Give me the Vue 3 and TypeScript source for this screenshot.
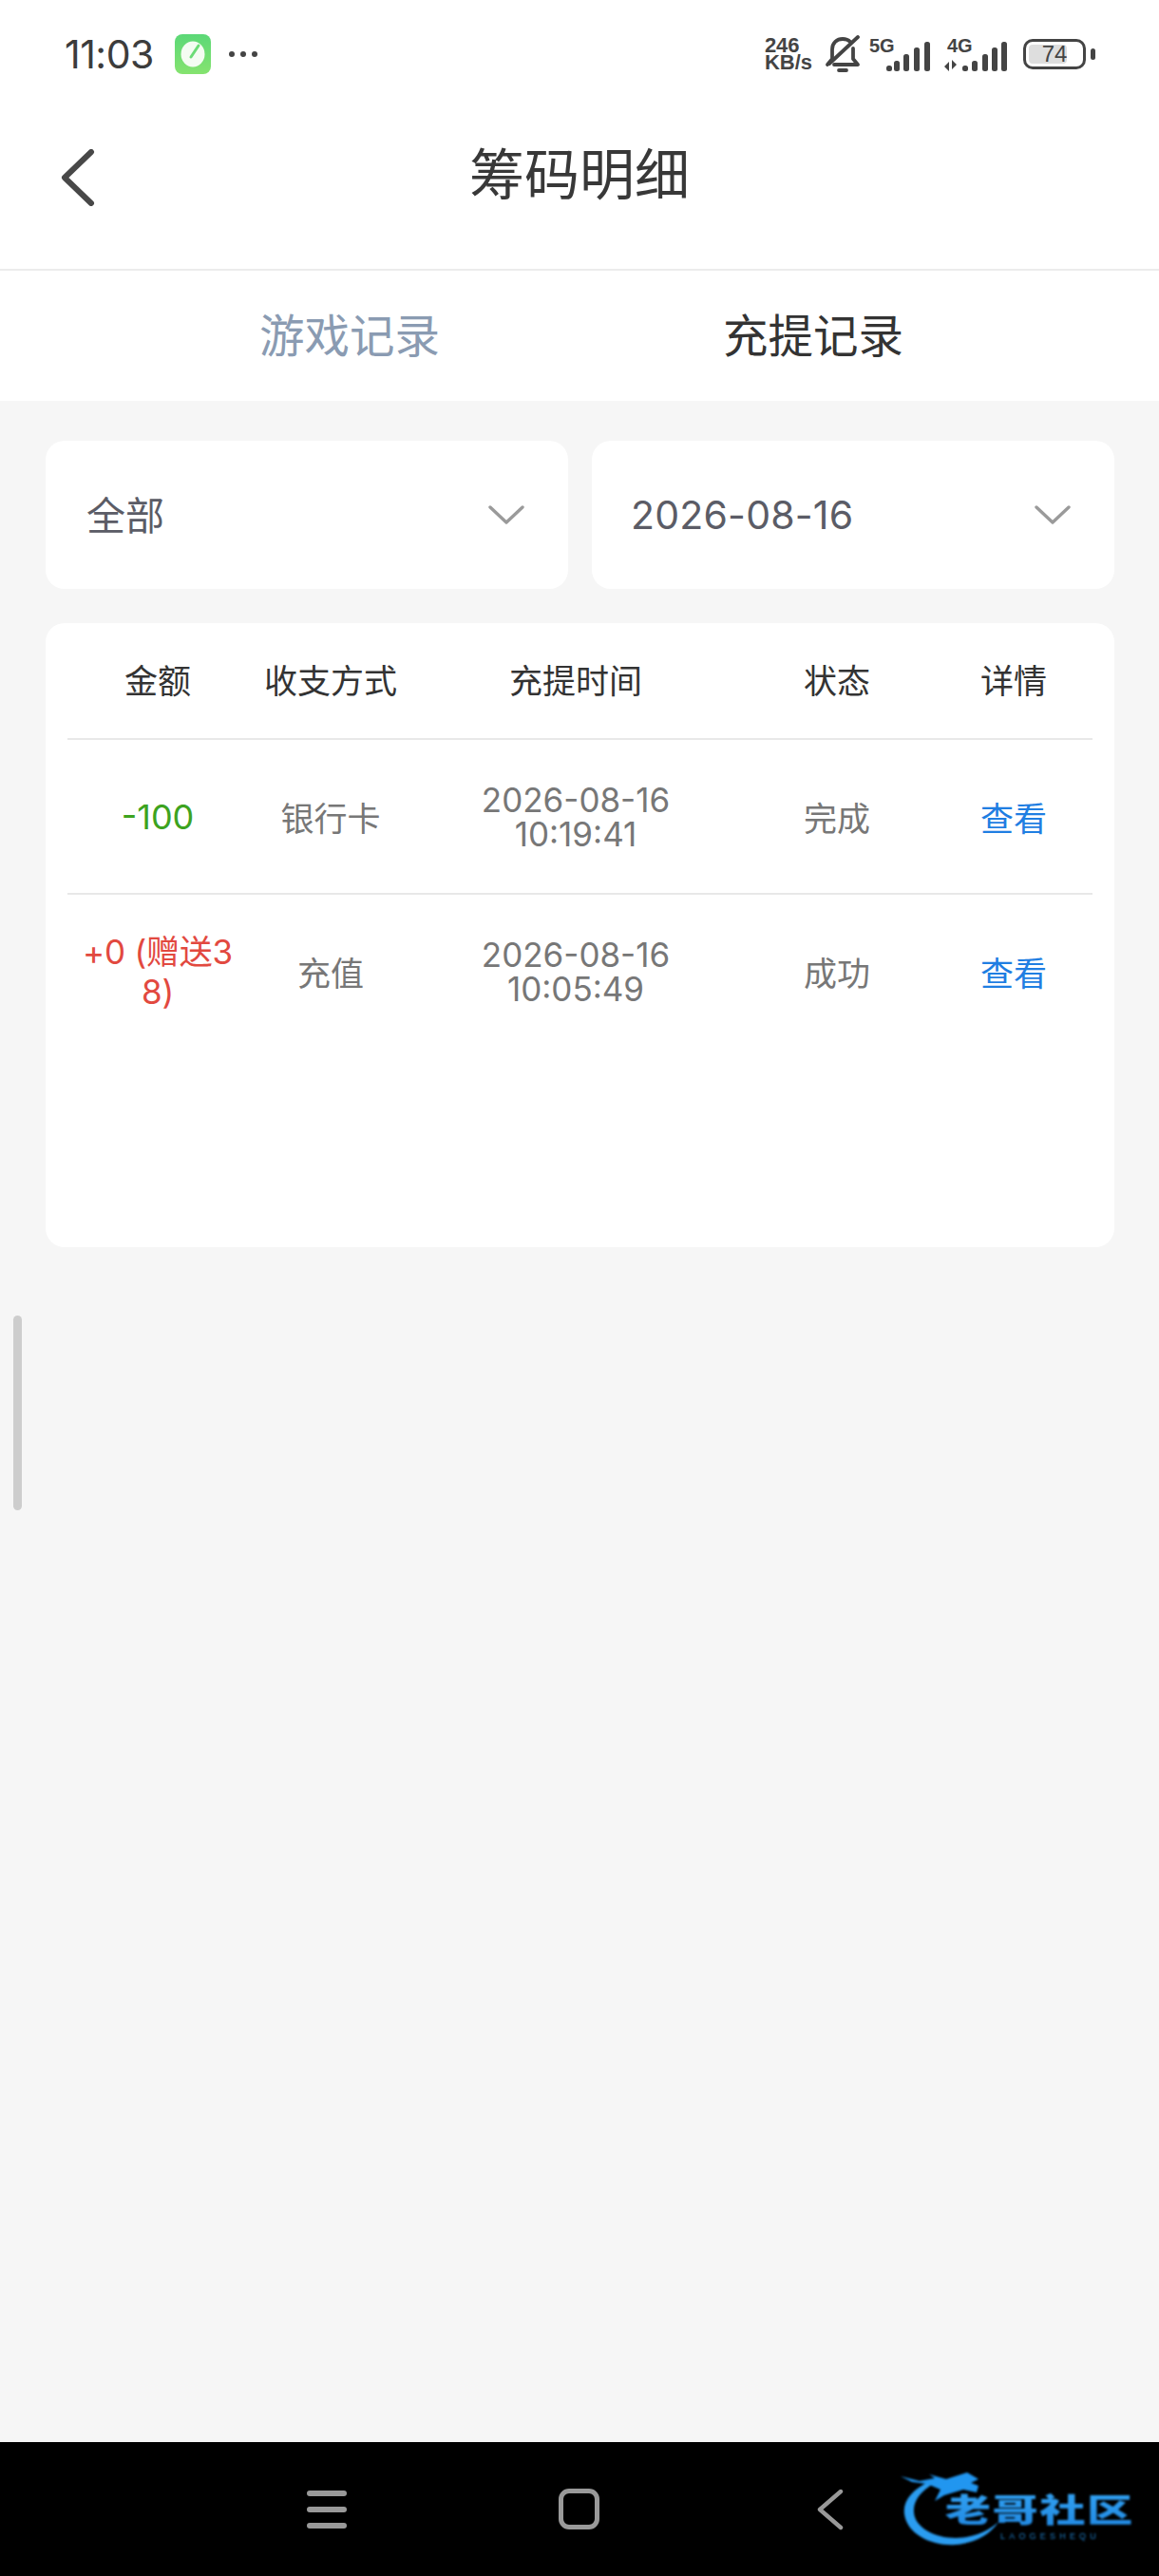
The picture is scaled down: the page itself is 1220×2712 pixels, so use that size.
<script setup lang="ts">
interface Row {
  amount: string
  kind: 'out' | 'in'
  method: string
  date: string
  time: string
  status: string
}
const heads: string[] = ['金额', '收支方式', '充提时间', '状态', '详情']
const rows: Row[] = [
  { amount: '-100', kind: 'out', method: '银行卡', date: '2026-08-16', time: '10:19:41', status: '完成' },
  { amount: '+0 (赠送38)', kind: 'in', method: '充值', date: '2026-08-16', time: '10:05:49', status: '成功' },
]
const bars5 = [
  { x: 18, h: 6 }, { x: 26, h: 11 }, { x: 36, h: 18 }, { x: 47, h: 25 }, { x: 58, h: 31 },
]
const bars4 = [
  { x: 19, h: 6 }, { x: 29, h: 11 }, { x: 40, h: 18 }, { x: 50, h: 25 }, { x: 60, h: 31 },
]
</script>

<template>
  <div class="page">
    <header class="status">
      <div class="status-left">
        <span class="clock">11:03</span>
        <svg class="app-icon" width="38" height="42" viewBox="0 0 38 42">
          <defs>
            <linearGradient id="appg" x1="0" y1="0" x2="0" y2="1">
              <stop offset="0" stop-color="#5bd877" />
              <stop offset="1" stop-color="#85e36f" />
            </linearGradient>
          </defs>
          <rect width="38" height="42" rx="8" fill="url(#appg)" />
          <ellipse cx="19" cy="21" rx="12.5" ry="13.5" fill="#f4fcf2" />
          <path d="M17 24 L25 12" stroke="#6bdc76" stroke-width="3" stroke-linecap="round" />
        </svg>
        <span class="dots"><i></i><i></i><i></i></span>
      </div>
      <div class="status-right">
        <span class="speed"><b>246</b><b>KB/s</b></span>
        <svg class="bell" width="38" height="40" viewBox="0 0 38 40" fill="none" stroke="#444" stroke-width="3.8" stroke-linecap="round" stroke-linejoin="round">
          <path d="M3 31 L8 25 V15 C8 8 13 4 19 4 C22 4 25 5 27 7" />
          <path d="M30 14 V25 L35 31 H10" />
          <path d="M5 30 L35 2" />
          <path d="M15 37 H23" />
        </svg>
        <svg class="signal" width="66" height="49" viewBox="0 -12 66 49">
          <text x="0" y="16" class="net">5G</text>
          <rect v-for="b in bars5" :key="b.x" :x="b.x" :y="36 - b.h" width="6" :height="b.h" rx="2.5" fill="#444" />
        </svg>
        <svg class="signal second" width="67" height="49" viewBox="0 -12 67 49">
          <text x="3" y="16" class="net">4G</text>
          <path d="M5 36 V26 L0 31 Z M8 24 V34 L13 29 Z" fill="#444" />
          <rect v-for="b in bars4" :key="b.x" :x="b.x" :y="36 - b.h" width="6" :height="b.h" rx="2.5" fill="#444" />
        </svg>
        <div class="battery">
          <div class="cell">
            <span class="charge"></span>
            <span class="level">74</span>
          </div>
          <span class="cap"></span>
        </div>
      </div>
    </header>

    <nav class="nav">
      <svg class="back" width="40" height="60" viewBox="0 0 40 60" fill="none">
        <path d="M34 3 L6 30 L34 57" stroke="#484848" stroke-width="6" stroke-linecap="round" stroke-linejoin="round" />
      </svg>
      <h1 class="title">筹码明细</h1>
    </nav>

    <div class="tabs">
      <span class="tab muted">游戏记录</span>
      <span class="tab">充提记录</span>
    </div>

    <main class="main">
      <div class="scroll-thumb"></div>

      <div class="filters">
        <div class="select">
          <span class="cjk lift">全部</span>
          <svg width="38" height="22" viewBox="0 0 38 22" fill="none">
            <path d="M2 3 L19 19 L36 3" stroke="#9a9a9a" stroke-width="3.4" stroke-linecap="round" stroke-linejoin="round" />
          </svg>
        </div>
        <div class="select">
          <span class="date-value">2026-08-16</span>
          <svg width="38" height="22" viewBox="0 0 38 22" fill="none">
            <path d="M2 3 L19 19 L36 3" stroke="#9a9a9a" stroke-width="3.4" stroke-linecap="round" stroke-linejoin="round" />
          </svg>
        </div>
      </div>

      <section class="card">
        <div class="grid head">
          <span v-for="h in heads" :key="h" class="cjk lift">{{ h }}</span>
        </div>
        <div v-for="r in rows" :key="r.time" class="grid row">
          <span class="amount" :class="r.kind">{{ r.amount }}</span>
          <span class="cjk">{{ r.method }}</span>
          <span class="when">{{ r.date }}<br />{{ r.time }}</span>
          <span class="cjk">{{ r.status }}</span>
          <a class="link cjk">查看</a>
        </div>
      </section>
    </main>

    <footer class="sysbar">
      <div class="menu"><i></i><i></i><i></i></div>
      <div class="home"></div>
      <svg class="sys-back" width="30" height="44" viewBox="0 0 30 44" fill="none">
        <path d="M26 3 L4 22 L26 41" stroke="#999" stroke-width="4.4" stroke-linecap="round" stroke-linejoin="round" />
      </svg>
      <svg class="logo" width="252" height="80" viewBox="0 0 252 80">
        <defs>
          <linearGradient id="lg" x1="0" y1="0" x2="0" y2="1">
            <stop offset="0" stop-color="#35a6f5" />
            <stop offset="1" stop-color="#1f86e0" />
          </linearGradient>
        </defs>
        <path d="M31 9 C12 18 2 30 4 44 C7 66 35 78 58 76 C78 74 94 66 103 52 C92 62 76 69 58 69 C36 69 15 58 14 42 C13 31 20 20 36 11 Z" fill="#2a9cf0" />
        <path d="M0 4 L20 9 L36 6 L30 2 L48 7 L70 0 L82 7 L74 11 L82 14 L80 21 L66 18 L46 24 L36 30 L42 18 L28 12 L12 10 Z" fill="#2196f0" />
        <text transform="scale(1.42,1)" x="33" y="52" class="logo-text" fill="url(#lg)">老哥社区</text>
        <text x="105" y="70" class="logo-sub">LAOGESHEQU</text>
      </svg>
    </footer>
  </div>
</template>

<style>
html, body { margin: 0; padding: 0; background: #f6f6f6; }
</style>

<style scoped>
.page {
  width: 1220px;
  height: 2712px;
  display: flex;
  flex-direction: column;
  background: #f6f6f6;
  font-family: Inter, "Noto Sans CJK SC", sans-serif;
  color: #333;
  overflow: hidden;
}
.cjk { font-family: "Noto Sans CJK SC", sans-serif; }
.lift { padding-bottom: 4px; }
.status {
  height: 114px;
  flex: none;
  display: flex;
  align-items: center;
  justify-content: space-between;
  padding: 0 68px;
  background: #fff;
  box-sizing: border-box;
}
.status-left { display: flex; align-items: center; }
.clock { font-size: 41px; color: #3c3c3c; width: 116px; letter-spacing: -0.5px; }
.app-icon { display: block; }
.dots { display: flex; gap: 6px; margin-left: 19px; }
.dots i { width: 6px; height: 6px; border-radius: 50%; background: #444; display: block; }
.status-right { display: flex; align-items: center; margin-right: -1px; }
.speed { display: flex; flex-direction: column; font-family: "Liberation Sans", sans-serif; color: #444; line-height: 18px; margin-right: 13px; font-size: 22px; }
.speed b { font-weight: 700; }
.bell { display: block; margin-right: 9px; }
.signal { display: block; margin-top: -12px; }
.signal.second { margin-left: 13px; }
.net { font-family: "Liberation Sans", sans-serif; font-weight: 700; font-size: 20px; fill: #444; }
.battery { display: flex; align-items: center; margin-left: 16px; gap: 5px; }
.cell {
  width: 66px;
  height: 32px;
  box-sizing: border-box;
  border: 3px solid #444;
  border-radius: 10px;
  position: relative;
  display: flex;
  align-items: center;
  justify-content: center;
}
.charge { position: absolute; left: 3px; top: 3px; bottom: 3px; width: 66%; background: #dedede; border-radius: 4px; }
.level { position: relative; font-size: 24px; color: #444; font-family: "Liberation Sans", sans-serif; }
.cap { width: 5px; height: 12px; background: #444; border-radius: 3px; }

.nav {
  height: 171px;
  flex: none;
  box-sizing: border-box;
  padding-bottom: 30px;
  background: #fff;
  border-bottom: 2px solid #ececec;
  position: relative;
  display: flex;
  align-items: center;
  justify-content: center;
}
.back { position: absolute; left: 62px; top: 43px; }
.title { margin: 0; font-size: 58px; font-weight: 400; color: #383838; line-height: 1; }

.tabs {
  height: 137px;
  flex: none;
  background: #fff;
  box-sizing: border-box;
  padding-left: 273px;
  display: flex;
  align-items: center;
  gap: 298px;
}
.tab { font-size: 47.5px; color: #333; line-height: 1; white-space: nowrap; }
.tab.muted { color: #8a9bb2; }

.main {
  flex: 1;
  position: relative;
  padding: 42px 47px 0 48px;
  box-sizing: border-box;
}
.scroll-thumb {
  position: absolute;
  left: 14px;
  top: 963px;
  width: 9px;
  height: 205px;
  border-radius: 5px;
  background: #cdcdcd;
}
.filters { display: grid; grid-template-columns: 550px 550px; gap: 25px; }
.select {
  height: 156px;
  background: #fff;
  border-radius: 20px;
  display: flex;
  align-items: center;
  justify-content: space-between;
  padding: 0 46px 0 43px;
  box-sizing: border-box;
  font-size: 41px;
  color: #5b5c66;
}
.date-value { margin-left: -2px; letter-spacing: 0.2px; }
.card {
  margin-top: 36px;
  height: 657px;
  box-sizing: border-box;
  background: #fff;
  border-radius: 20px;
  padding: 0 23px;
}
.grid {
  display: grid;
  grid-template-columns: 190px 174px 342px 208px 164px;
  align-items: center;
  text-align: center;
  box-sizing: border-box;
}
.head {
  height: 123px;
  font-size: 35px;
  color: #333;
  border-bottom: 2px solid #e8e8e8;
}
.row {
  height: 161px;
  font-size: 35px;
  color: #777;
  line-height: 36px;
}
.row + .row { border-top: 2px solid #e8e8e8; height: 164px; }
.amount { line-height: 42px; padding: 0 10px; word-break: break-all; font-size: 36px; }
.amount.out { color: #3da31f; }
.amount.in { color: #e2493f; font-size: 35px; letter-spacing: -0.2px; }
.when { font-size: 35px; }
.link { color: #1f7ee2; }

.sysbar {
  height: 141px;
  flex: none;
  background: #000;
  position: relative;
  display: flex;
  align-items: center;
  padding: 0 0 0 323px;
  box-sizing: border-box;
}
.menu { width: 42px; display: flex; flex-direction: column; gap: 11px; }
.menu i { display: block; height: 6px; border-radius: 3px; background: #999; }
.home {
  margin-left: 223px;
  width: 43px;
  height: 43px;
  box-sizing: border-box;
  border: 5px solid #999;
  border-radius: 11px;
}
.sys-back { margin-left: 228px; display: block; }
.logo { position: absolute; left: 948px; top: 32px; filter: blur(0.8px); }
.logo-text {
  font-family: "Noto Sans CJK SC", sans-serif;
  font-weight: 900;
  font-size: 34px;
  letter-spacing: 1px;
}
.logo-sub {
  font-family: "Liberation Sans", sans-serif;
  font-size: 9px;
  letter-spacing: 4.2px;
  fill: #1f7fca;
}
</style>
